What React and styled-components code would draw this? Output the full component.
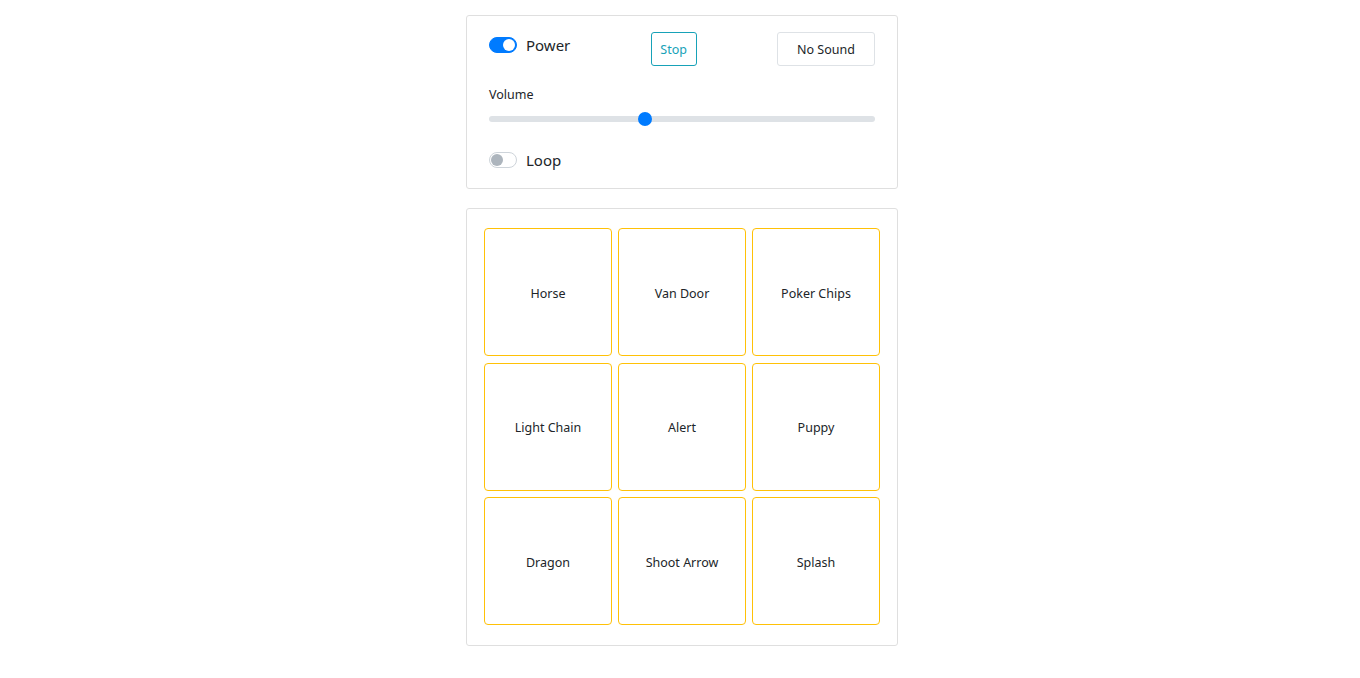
import React, { useState } from "react";
import styled, { createGlobalStyle } from "styled-components";

const Global = createGlobalStyle`
  html, body { margin: 0; padding: 0; background: #fff; }
  body { font-family: "Noto Sans", "Open Sans", sans-serif; color: #212529; }
  * { box-sizing: border-box; }
`;

const Page = styled.div`
  display: flex;
  flex-direction: column;
  align-items: center;
  padding: 15px 0 0 4px;
  gap: 19px;
`;

const Card = styled.div`
  width: 432px;
  border: 1px solid #dfdfdf;
  border-radius: 3px;
  background: #fff;
`;

const Controls = styled(Card)`
  padding: 16px 22px 15px 22px;
  display: flex;
  flex-direction: column;
`;

const TopRow = styled.div`
  display: flex;
  justify-content: space-between;
  align-items: flex-start;
`;

const SwitchLabel = styled.label`
  display: flex;
  align-items: center;
  gap: 9px;
  font-size: 15px;
  color: #212529;
  cursor: pointer;
  height: 26px;
`;

const Track = styled.span`
  position: relative;
  width: 28px;
  height: 16px;
  border-radius: 8px;
  background: ${(p) => (p.$on ? "#007bff" : "#fff")};
  border: 1px solid ${(p) => (p.$on ? "#007bff" : "#ced4da")};
  flex-shrink: 0;
`;

const Knob = styled.span`
  position: absolute;
  top: 1px;
  left: ${(p) => (p.$on ? "13px" : "1px")};
  width: 12px;
  height: 12px;
  border-radius: 50%;
  background: ${(p) => (p.$on ? "#fff" : "#adb5bd")};
`;

const Button = styled.button`
  height: 34px;
  width: ${(p) => p.$w}px;
  font-family: inherit;
  font-size: 12.5px;
  background: #fff;
  border-radius: 3px;
  border: 1px solid ${(p) => (p.$variant === "info" ? "#17a2b8" : "#dee2e6")};
  color: ${(p) => (p.$variant === "info" ? "#17a2b8" : "#212529")};
  padding: 0;
  cursor: pointer;
`;

const VolumeLabel = styled.div`
  font-size: 12.5px;
  margin-top: 20px;
  color: #212529;
`;

const Slider = styled.div`
  position: relative;
  height: 6px;
  margin-top: 13px;
  border-radius: 3px;
  background: #dee2e6;
`;

const Thumb = styled.span`
  position: absolute;
  top: -4px;
  width: 14px;
  height: 14px;
  margin-left: -7px;
  border-radius: 50%;
  background: #007bff;
`;

const LoopRow = styled.div`
  margin-top: 25px;
`;

const PadsCard = styled(Card)`
  padding: 19px 17px 20px;
  display: grid;
  grid-template-columns: repeat(3, 128px);
  grid-auto-rows: 128px;
  row-gap: 6.5px;
  column-gap: 6px;
`;

const Pad = styled.button`
  font-family: inherit;
  font-size: 12.5px;
  color: #212529;
  background: #fff;
  border: 1px solid #ffc107;
  border-radius: 4px;
  display: flex;
  align-items: center;
  justify-content: center;
  cursor: pointer;
  padding: 2px 0 0;
`;

const Switch = ({ on, children }) => (
  <SwitchLabel>
    <Track $on={on}>
      <Knob $on={on} />
    </Track>
    {children}
  </SwitchLabel>
);

const pads = [
  "Horse",
  "Van Door",
  "Poker Chips",
  "Light Chain",
  "Alert",
  "Puppy",
  "Dragon",
  "Shoot Arrow",
  "Splash",
];

export default function App() {
  const [volume] = useState(0.4);
  return (
    <>
      <Global />
      <Page>
        <Controls>
          <TopRow>
            <Switch on>Power</Switch>
            <Button $variant="info" $w={46}>Stop</Button>
            <Button $w={98}>No Sound</Button>
          </TopRow>
          <VolumeLabel>Volume</VolumeLabel>
          <Slider>
            <Thumb style={{ left: `calc(7px + (100% - 14px) * ${volume})` }} />
          </Slider>
          <LoopRow>
            <Switch on={false}>Loop</Switch>
          </LoopRow>
        </Controls>
        <PadsCard>
          {pads.map((p) => (
            <Pad key={p}>{p}</Pad>
          ))}
        </PadsCard>
      </Page>
    </>
  );
}
